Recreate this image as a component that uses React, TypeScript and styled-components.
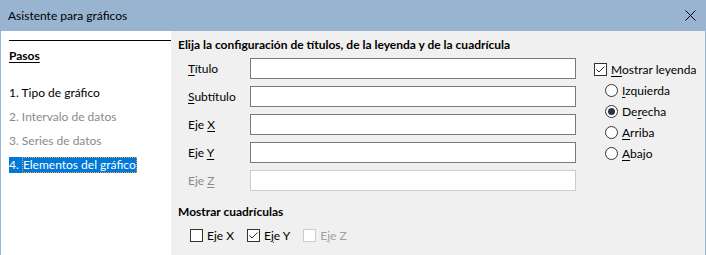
import React from "react";
import styled, { createGlobalStyle } from "styled-components";

const GlobalStyle = createGlobalStyle`
  html, body {
    margin: 0;
    padding: 0;
    background: #ffffff;
  }
  body {
    font-family: Lato, "Liberation Sans", Arial, sans-serif;
    font-size: 12px;
    color: #000000;
  }
`;

const Window = styled.div`
  width: 706px;
  height: 255px;
  display: flex;
  flex-direction: column;
  box-sizing: border-box;
  border-left: 1px solid #99b4d1;
  border-right: 1px solid #99b4d1;
  overflow: hidden;
`;

const TitleBar = styled.div`
  height: 31px;
  flex: none;
  background: #99b4d1;
  display: flex;
  align-items: center;
  justify-content: space-between;
  padding: 0 10px 0 8px;
  margin-left: -1px;
  margin-right: -1px;
`;

const TitleText = styled.span`
  font-size: 12px;
`;

const Body = styled.div`
  flex: 1;
  display: flex;
  background: #f0f0f0;
`;

const StepsPanel = styled.div`
  width: 170px;
  flex: none;
  background: #ffffff;
  padding: 9px 0 0 8px;
  box-sizing: border-box;
`;

const StepsHeader = styled.div`
  border-top: 1px solid #000000;
  padding-top: 7px;
  margin-bottom: 21px;
`;

const StepsTitle = styled.span`
  font-weight: bold;
  text-decoration: underline;
  text-underline-offset: 2px;
  line-height: 16px;
`;

const StepItem = styled.div<{ $state: "done" | "todo" | "active" }>`
  height: 16px;
  line-height: 16px;
  margin-bottom: 8px;
  color: ${({ $state }) => ($state === "todo" ? "#8a8a8a" : "#000000")};
  ${({ $state }) =>
    $state === "active" &&
    `
    display: inline-flex;
    background: #0078d7;
    color: #ffffff;
  `}
`;

const FocusText = styled.span`
  outline: 1px dotted #f0a040;
  outline-offset: -1px;
  padding: 0 1px;
`;

const Content = styled.div`
  flex: 1;
  padding: 6px 0 0 7px;
  display: flex;
  flex-direction: column;
`;

const Heading = styled.div`
  font-weight: bold;
  line-height: 16px;
`;

const TopArea = styled.div`
  display: flex;
  margin-top: 5px;
`;

const FieldGrid = styled.div`
  display: grid;
  grid-template-columns: 62px 326px;
  row-gap: 7px;
  padding-left: 10px;
`;

const FieldLabel = styled.label<{ $disabled?: boolean }>`
  display: flex;
  align-items: center;
  height: 21px;
  white-space: pre;
  color: ${({ $disabled }) => ($disabled ? "#8a8a8a" : "#000000")};
`;

const TextField = styled.input`
  height: 21px;
  box-sizing: border-box;
  margin: 0;
  border: 1px solid #7a7a7a;
  background: #ffffff;
  &:disabled {
    border-color: #cccccc;
  }
`;

const Mnemonic = styled.u`
  text-underline-offset: 2px;
`;

const LegendColumn = styled.div`
  margin-left: 18px;
  display: flex;
  flex-direction: column;
  padding-top: 3px;
`;

const OptionRow = styled.label<{ $indent?: boolean; $disabled?: boolean }>`
  display: flex;
  align-items: center;
  gap: 4px;
  height: 16px;
  margin-bottom: 5px;
  white-space: pre;
  margin-left: ${({ $indent }) => ($indent ? "11px" : "0")};
  color: ${({ $disabled }) => ($disabled ? "#a0a0a0" : "#000000")};
`;

const Box = styled.span<{ $disabled?: boolean }>`
  width: 13px;
  height: 13px;
  box-sizing: border-box;
  border: 1px solid ${({ $disabled }) => ($disabled ? "#cccccc" : "#333333")};
  background: #ffffff;
  display: inline-flex;
  align-items: center;
  justify-content: center;
  flex: none;
`;

const Radio = styled.span`
  width: 13px;
  height: 13px;
  box-sizing: border-box;
  border: 1px solid #333333;
  border-radius: 50%;
  background: #ffffff;
  display: inline-flex;
  align-items: center;
  justify-content: center;
  flex: none;
`;

const RadioDot = styled.span`
  width: 7px;
  height: 7px;
  border-radius: 50%;
  background: #333333;
`;

const GridSection = styled.div`
  margin-top: 13px;
`;

const GridRow = styled.div`
  display: flex;
  gap: 13px;
  margin-top: 7px;
  padding-left: 12px;
`;

const Check = () => (
  <svg width="11" height="11" viewBox="0 0 11 11">
    <path d="M1.5 5.5 L4 8 L9.5 2.5" fill="none" stroke="#333" strokeWidth="1" />
  </svg>
);

const CloseIcon = () => (
  <svg width="11" height="11" viewBox="0 0 11 11">
    <path d="M0.5 0.5 L10.5 10.5 M10.5 0.5 L0.5 10.5" stroke="#000" strokeWidth="1" />
  </svg>
);

const CheckBox: React.FC<{ checked?: boolean; disabled?: boolean }> = ({ checked, disabled }) => (
  <Box $disabled={disabled}>{checked && <Check />}</Box>
);

const RadioButton: React.FC<{ checked?: boolean }> = ({ checked }) => <Radio>{checked && <RadioDot />}</Radio>;

const fields = [
  { pre: "", key: "T", post: "ítulo" },
  { pre: "", key: "S", post: "ubtítulo" },
  { pre: "Eje ", key: "X", post: "" },
  { pre: "Eje ", key: "Y", post: "" },
  { pre: "Eje ", key: "Z", post: "", disabled: true },
];

const positions = [
  { pre: "", key: "I", post: "zquierda" },
  { pre: "De", key: "r", post: "echa", checked: true },
  { pre: "", key: "A", post: "rriba" },
  { pre: "", key: "A", post: "bajo" },
];

const App: React.FC = () => (
  <>
    <GlobalStyle />
    <Window>
      <TitleBar>
        <TitleText>Asistente para gráficos</TitleText>
        <CloseIcon />
      </TitleBar>
      <Body>
        <StepsPanel>
          <StepsHeader>
            <StepsTitle>Pasos</StepsTitle>
          </StepsHeader>
          <StepItem $state="done">1. Tipo de gráfico</StepItem>
          <StepItem $state="todo">2. Intervalo de datos</StepItem>
          <StepItem $state="todo">3. Series de datos</StepItem>
          <StepItem $state="active">
            4.&nbsp;<FocusText>Elementos del gráfico</FocusText>
          </StepItem>
        </StepsPanel>
        <Content>
          <Heading>Elija la configuración de títulos, de la leyenda y de la cuadrícula</Heading>
          <TopArea>
            <FieldGrid>
              {fields.map((f) => (
                <React.Fragment key={f.key}>
                  <FieldLabel $disabled={f.disabled}>
                    <span>
                      {f.pre}
                      <Mnemonic>{f.key}</Mnemonic>
                      {f.post}
                    </span>
                  </FieldLabel>
                  <TextField disabled={f.disabled} />
                </React.Fragment>
              ))}
            </FieldGrid>
            <LegendColumn>
              <OptionRow>
                <CheckBox checked />
                <span>
                  <Mnemonic>M</Mnemonic>ostrar leyenda
                </span>
              </OptionRow>
              {positions.map((p) => (
                <OptionRow $indent key={p.post}>
                  <RadioButton checked={p.checked} />
                  <span>
                    {p.pre}
                    <Mnemonic>{p.key}</Mnemonic>
                    {p.post}
                  </span>
                </OptionRow>
              ))}
            </LegendColumn>
          </TopArea>
          <GridSection>
            <Heading>Mostrar cuadrículas</Heading>
            <GridRow>
              <OptionRow>
                <CheckBox />
                <span>Eje X</span>
              </OptionRow>
              <OptionRow>
                <CheckBox checked />
                <span>
                  E<Mnemonic>j</Mnemonic>e Y
                </span>
              </OptionRow>
              <OptionRow $disabled>
                <CheckBox disabled />
                <span>
                  E<Mnemonic>j</Mnemonic>e Z
                </span>
              </OptionRow>
            </GridRow>
          </GridSection>
        </Content>
      </Body>
    </Window>
  </>
);

export default App;
